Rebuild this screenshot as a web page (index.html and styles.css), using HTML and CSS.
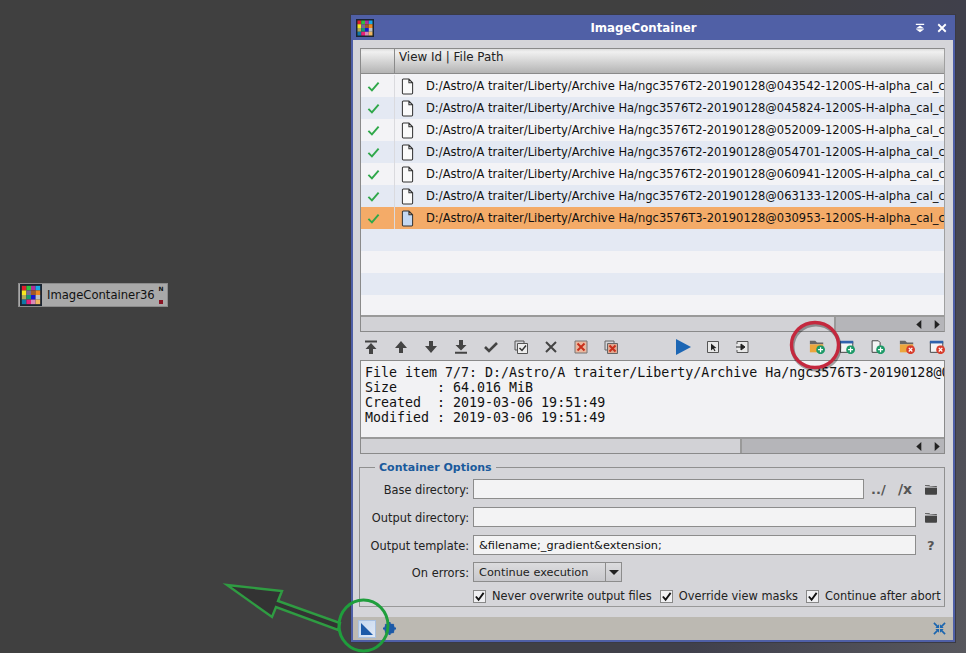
FILE: index.html
```html
<!DOCTYPE html>
<html>
<head>
	<title>ImageContainer</title>
	<link rel="stylesheet" href="styles.css">
</head>
<body>
	<svg class="defs" width="0" height="0">
		<defs>
			<symbol id="grid" viewBox="0 0 24 24">
				<rect width="24" height="24" fill="#1b2430"/>
				<rect x="2" y="2" width="5" height="5" fill="#e0202c"/><rect x="7" y="2" width="5" height="5" fill="#2fc040"/><rect x="12" y="2" width="5" height="5" fill="#b03098"/><rect x="17" y="2" width="5" height="5" fill="#18a8e8"/>
				<rect x="2" y="7" width="5" height="5" fill="#f8e820"/><rect x="7" y="7" width="5" height="5" fill="#786898"/><rect x="12" y="7" width="5" height="5" fill="#a05828"/><rect x="17" y="7" width="5" height="5" fill="#f08820"/>
				<rect x="2" y="12" width="5" height="5" fill="#b0a858"/><rect x="7" y="12" width="5" height="5" fill="#189870"/><rect x="12" y="12" width="5" height="5" fill="#1818d0"/><rect x="17" y="12" width="5" height="5" fill="#c0c0c0"/>
				<rect x="2" y="17" width="5" height="5" fill="#1078a8"/><rect x="7" y="17" width="5" height="5" fill="#e82078"/><rect x="12" y="17" width="5" height="5" fill="#d888b8"/><rect x="17" y="17" width="5" height="5" fill="#f0b860"/>
			</symbol>
			<symbol id="check" viewBox="0 0 16 14"><path d="M1.500 7.500l4.500 4.500 8.500-10" fill="none" stroke="#2fa84a" stroke-width="2.400"/></symbol>
			<symbol id="doc" viewBox="0 0 14 18"><path d="M2.500 1h6l4 4v11a1 1 0 0 1-1 1h-9a1 1 0 0 1-1-1V2a1 1 0 0 1 1-1zM8.500 1v4h4" fill="inherit" stroke="#333" stroke-width="1.100"/></symbol>
			<symbol id="folder" viewBox="0 0 14 12"><path d="M0 2V1h5l1 1h7a1 1 0 0 1 1 1v8a1 1 0 0 1-1 1H1a1 1 0 0 1-1-1V3h14" fill="#444"/><path d="M0 3.600h14" stroke="#d4d4d8" stroke-width=".8"/></symbol>
			<symbol id="yfolder" viewBox="0 0 18 16"><path d="M1 1h6l2 2h7v2H1z" fill="#666"/><path d="M1 5h15v9H1z" fill="#eca63c"/></symbol>
			<symbol id="win" viewBox="0 0 18 16"><path d="M1.500 2h14v12h-14z" fill="#f4f4f4" stroke="#333"/><path d="M1 1h15v3H1z" fill="#2f62ac"/></symbol>
			<symbol id="plus" viewBox="0 0 10 10"><circle cx="5" cy="5" r="5" fill="#1d9a68"/><path d="M5 2.200v5.600M2.200 5h5.600" stroke="#fff" stroke-width="1.400"/></symbol>
			<symbol id="minus" viewBox="0 0 10 10"><circle cx="5" cy="5" r="5" fill="#d83c2c"/><path d="M3 3l4 4M7 3l-4 4" stroke="#fff" stroke-width="1.400"/></symbol>
			<symbol id="left" viewBox="0 0 8 12"><path d="M6.500 1v10L1 6z" fill="#222"/></symbol>
			<symbol id="right" viewBox="0 0 8 12"><path d="M1.500 1v10L7 6z" fill="#222"/></symbol>
		</defs>
	</svg>

	<div class="node">
		<svg class="node-icon"><use href="#grid"/></svg>
		<span class="node-name">ImageContainer36</span>
		<div class="node-ports"><span class="port-n">N</span><span class="port-p"></span></div>
	</div>

	<div class="win">
		<div class="titlebar">
			<svg class="title-icon"><use href="#grid"/></svg>
			<span class="title">ImageContainer</span>
			<svg class="title-btn" viewBox="0 0 12 10"><path d="M1 0h10v1.400H1zM6 2l5 3.600H1zM6 10L1 6.400h10z" fill="#fff"/></svg>
			<svg class="title-btn title-close" viewBox="0 0 12 12"><path d="M1.500 1.500l9 9M10.500 1.500l-9 9" stroke="#fff" stroke-width="2.200"/></svg>
		</div>

		<div class="content">
			<div class="table">
				<div class="thead">
					<div class="col-check"></div>
					<div class="col-path">View Id | File Path</div>
				</div>
				<div class="rows">
					<div class="row"><div class="cell-check"><svg class="ico-check"><use href="#check"/></svg></div><div class="cell-path"><svg class="ico-doc" fill="#fafafa"><use href="#doc"/></svg><span class="path">D:/Astro/A traiter/Liberty/Archive Ha/ngc3576T2-20190128@043542-1200S-H-alpha_cal_c</span></div></div>
					<div class="row alt"><div class="cell-check"><svg class="ico-check"><use href="#check"/></svg></div><div class="cell-path"><svg class="ico-doc" fill="#fafafa"><use href="#doc"/></svg><span class="path">D:/Astro/A traiter/Liberty/Archive Ha/ngc3576T2-20190128@045824-1200S-H-alpha_cal_c</span></div></div>
					<div class="row"><div class="cell-check"><svg class="ico-check"><use href="#check"/></svg></div><div class="cell-path"><svg class="ico-doc" fill="#fafafa"><use href="#doc"/></svg><span class="path">D:/Astro/A traiter/Liberty/Archive Ha/ngc3576T2-20190128@052009-1200S-H-alpha_cal_c</span></div></div>
					<div class="row alt"><div class="cell-check"><svg class="ico-check"><use href="#check"/></svg></div><div class="cell-path"><svg class="ico-doc" fill="#fafafa"><use href="#doc"/></svg><span class="path">D:/Astro/A traiter/Liberty/Archive Ha/ngc3576T2-20190128@054701-1200S-H-alpha_cal_c</span></div></div>
					<div class="row"><div class="cell-check"><svg class="ico-check"><use href="#check"/></svg></div><div class="cell-path"><svg class="ico-doc" fill="#fafafa"><use href="#doc"/></svg><span class="path">D:/Astro/A traiter/Liberty/Archive Ha/ngc3576T2-20190128@060941-1200S-H-alpha_cal_c</span></div></div>
					<div class="row alt"><div class="cell-check"><svg class="ico-check"><use href="#check"/></svg></div><div class="cell-path"><svg class="ico-doc" fill="#fafafa"><use href="#doc"/></svg><span class="path">D:/Astro/A traiter/Liberty/Archive Ha/ngc3576T2-20190128@063133-1200S-H-alpha_cal_c</span></div></div>
					<div class="row sel"><div class="cell-check"><svg class="ico-check"><use href="#check"/></svg></div><div class="cell-path"><svg class="ico-doc" fill="#c4d8f2"><use href="#doc"/></svg><span class="path">D:/Astro/A traiter/Liberty/Archive Ha/ngc3576T3-20190128@030953-1200S-H-alpha_cal_c</span></div></div>
					<div class="row alt"></div>
					<div class="row"></div>
					<div class="row alt"></div>
					<div class="row"></div>
				</div>
				<div class="hscroll">
					<div class="thumb thumb-table"></div>
					<svg class="sb-arrow"><use href="#left"/></svg>
					<svg class="sb-arrow"><use href="#right"/></svg>
				</div>
			</div>

			<div class="toolbar">
				<div class="tb"><svg viewBox="0 0 16 16"><path d="M2 1.500h12v2H2z" fill="#444"/><path d="M8 4L2.500 10H6v5h4v-5h3.500z" fill="#444"/></svg></div>
				<div class="tb"><svg viewBox="0 0 16 16"><path d="M8 2L2 9h4v5h4V9h4z" fill="#444"/></svg></div>
				<div class="tb"><svg viewBox="0 0 16 16"><path d="M8 14l6-7h-4V2H6v5H2z" fill="#444"/></svg></div>
				<div class="tb"><svg viewBox="0 0 16 16"><path d="M8 11.500L2.500 6H6V1h4v5h3.500zM2 12.800h12v2H2z" fill="#444"/></svg></div>
				<div class="tb"><svg viewBox="0 0 16 16"><path d="M2 8l4 4 8-8" fill="none" stroke="#444" stroke-width="2.600"/></svg></div>
				<div class="tb"><svg viewBox="0 0 16 16"><path d="M2 2h9v2M2 2v9h2" fill="none" stroke="#555"/><path d="M4.500 4.500h10v10h-10z" fill="#eee" stroke="#555"/><path d="M6.500 9l2.500 2.500 4-5" fill="none" stroke="#333" stroke-width="1.500"/></svg></div>
				<div class="tb"><svg viewBox="0 0 16 16"><path d="M3 3l10 10M13 3L3 13" stroke="#444" stroke-width="2"/></svg></div>
				<div class="tb"><svg viewBox="0 0 16 16"><path d="M2 2h12v12H2z" fill="#eab8a0" stroke="#777"/><path d="M4.500 4.500l7 7M11.500 4.500l-7 7" stroke="#c8301c" stroke-width="2"/></svg></div>
				<div class="tb"><svg viewBox="0 0 16 16"><path d="M2 2h9v2M2 2v9h2" fill="none" stroke="#666"/><path d="M4.500 4.500h10v10h-10z" fill="#e0a890" stroke="#666"/><path d="M6.500 6.500l6 6M12.500 6.500l-6 6" stroke="#c8301c" stroke-width="2"/></svg></div>

				<div class="tb tb-play"><svg viewBox="0 0 16 16"><path d="M1 0l15 8-15 8z" fill="#1c66b4"/></svg></div>
				<div class="tb"><svg viewBox="0 0 16 16"><path d="M2.500 2.500h11v11h-11z" fill="#e8e8e8" stroke="#555"/><path d="M6 4.500v7l2-1.800 1.500 2.600 1-.6-1.500-2.500 2.500-.2z" fill="#222"/></svg></div>
				<div class="tb"><svg viewBox="0 0 16 16"><path d="M2 5V2.500h11v11H2V11" fill="#e8e8e8" stroke="#555"/><path d="M1 8h6M6 5l4 3-4 3z" fill="#222" stroke="#222"/></svg></div>

				<div class="tb tb-add"><svg viewBox="0 0 18 16"><use href="#yfolder"/><use href="#plus" x="8" y="6" width="10" height="10"/></svg></div>
				<div class="tb"><svg viewBox="0 0 18 16"><use href="#win"/><use href="#plus" x="8" y="6" width="10" height="10"/></svg></div>
				<div class="tb"><svg viewBox="0 0 18 16"><path d="M3.500 1h7l2 2v11h-9z" fill="#f4f4f4" stroke="#333"/><use href="#plus" x="8" y="6" width="10" height="10"/></svg></div>
				<div class="tb"><svg viewBox="0 0 18 16"><use href="#yfolder"/><use href="#minus" x="8" y="6" width="10" height="10"/></svg></div>
				<div class="tb"><svg viewBox="0 0 18 16"><use href="#win"/><use href="#minus" x="8" y="6" width="10" height="10"/></svg></div>
			</div>

			<div class="info">
				<pre class="info-text">File item 7/7: D:/Astro/A traiter/Liberty/Archive Ha/ngc3576T3-20190128@0
Size     : 64.016 MiB
Created  : 2019-03-06 19:51:49
Modified : 2019-03-06 19:51:49</pre>
				<div class="hscroll">
					<div class="thumb thumb-info"></div>
					<svg class="sb-arrow"><use href="#left"/></svg>
					<svg class="sb-arrow"><use href="#right"/></svg>
				</div>
			</div>

			<fieldset class="group">
				<legend>Container Options</legend>
				<div class="frow frow-base">
					<label>Base directory:</label>
					<div class="input"></div>
					<span class="tool-txt">../</span>
					<span class="tool-txt tool-fx">/x</span>
					<svg class="tool-ico"><use href="#folder"/></svg>
				</div>
				<div class="frow frow-out">
					<label>Output directory:</label>
					<div class="input"></div>
					<svg class="tool-ico"><use href="#folder"/></svg>
				</div>
				<div class="frow frow-tpl">
					<label>Output template:</label>
					<div class="input">&amp;filename;_gradient&amp;extension;</div>
					<span class="tool-q">?</span>
				</div>
				<div class="frow frow-err">
					<label>On errors:</label>
					<div class="combo">
						<span class="combo-val">Continue execution</span>
						<span class="combo-arrow"></span>
					</div>
				</div>
				<div class="checks">
					<span class="chk"><span class="box"><svg viewBox="0 0 12 12"><path d="M2 6l3 3.500L10.500 2" fill="none" stroke="#111" stroke-width="2"/></svg></span>Never overwrite output files</span>
					<span class="chk"><span class="box"><svg viewBox="0 0 12 12"><path d="M2 6l3 3.500L10.500 2" fill="none" stroke="#111" stroke-width="2"/></svg></span>Override view masks</span>
					<span class="chk"><span class="box"><svg viewBox="0 0 12 12"><path d="M2 6l3 3.500L10.500 2" fill="none" stroke="#111" stroke-width="2"/></svg></span>Continue after abort</span>
				</div>
			</fieldset>
		</div>

		<div class="footer">
			<span class="foot-btn"><svg viewBox="0 0 14 14"><path d="M1 1l12 12H1z" fill="#1c5aa8"/></svg></span>
			<svg class="foot-gear" viewBox="0 0 14 14"><circle cx="7" cy="7" r="4" fill="none" stroke="#1c5aa8" stroke-width="3.400"/><path d="M7 0v14M0 7h14M2.500 2.500l9 9M11.500 2.500l-9 9" stroke="#1c5aa8" stroke-width="2.200"/></svg>
			<svg class="foot-shrink" viewBox="0 0 14 14"><path d="M1 1l4.500 4.500M13 1L8.500 5.500M1 13l4.500-4.500M13 13L8.500 8.500" stroke="#1c66b0" stroke-width="1.800"/><path d="M6.500 6.500V2.500L2.500 6.500zM7.500 6.500V2.500l4 4zM6.500 7.500v4l-4-4zM7.500 7.500v4l4-4z" fill="#1c66b0"/></svg>
		</div>
	</div>

	<svg class="marks" viewBox="0 0 966 653">
		<ellipse cx="815" cy="345" rx="23.500" ry="22.500" fill="none" stroke="#00000055" stroke-width="4" transform="translate(1 2)"/>
		<ellipse cx="815" cy="345" rx="23.500" ry="22.500" fill="none" stroke="#c4283e" stroke-width="3.400"/>
		<path d="M227 585l55 6-4 10 62 22-2 7-62-23-4 10z" fill="#26262680" stroke="#2f9c42" stroke-width="2.400"/>
		<ellipse cx="363.500" cy="625.500" rx="24.500" ry="25.500" fill="none" stroke="#1f9e3c" stroke-width="3"/>
	</svg>
</body>
</html>
```

FILE: styles.css
```css
html,body{
	margin:0;
	padding:0;
}
body{
	width:966px;
	height:653px;
	overflow:hidden;
	position:relative;
	background:linear-gradient(115deg,#404040 55%,#40404c 78%,#58585e 100%);
	font-family:"DejaVu Sans",sans-serif;
	color:#222;
}
.defs{
	position:absolute;
}

/* process icon on the workspace */
.node{
	position:absolute;
	left:18px;
	top:283px;
	width:150px;
	height:24px;
	background:#a9a9a9;
	border:1px solid #8c8c8c;
	box-sizing:border-box;
	display:flex;
	align-items:center;
	padding-left:1px;
}
.node-icon{
	width:22px;
	height:22px;
}
.node-name{
	margin-left:5px;
	font-size:11.6px;
	color:#111;
	flex:1;
}
.node-ports{
	display:flex;
	flex-direction:column;
	align-items:center;
	justify-content:space-between;
	height:20px;
	width:10px;
	margin-right:1px;
}
.port-n{
	font-size:6px;
	font-weight:bold;
	color:#111;
	line-height:7px;
}
.port-p{
	width:4px;
	height:4px;
	background:#8a1424;
	margin-bottom:1px;
}

/* window */
.win{
	position:absolute;
	left:351px;
	top:15px;
	width:604px;
	height:627px;
	box-sizing:border-box;
	border:2px solid #4f5fa6;
	border-top:0;
	background:#d5d5d9;
	display:flex;
	flex-direction:column;
	box-shadow:0 0 0 1px #3a3a44;
}
.titlebar{
	height:25px;
	background:#5060a6;
	display:flex;
	align-items:center;
	flex:none;
	color:#fff;
}
.title-icon{
	width:18px;
	height:18px;
	margin-left:3px;
}
.title{
	flex:1;
	text-align:center;
	font-weight:bold;
	font-size:11.8px;
	padding-right:2px;
}
.title-btn{
	width:10px;
	height:10px;
	margin-right:12px;
}
.title-close{
	margin-right:6px;
}
.content{
	flex:1;
	padding:8px 8px 0 7px;
	display:flex;
	flex-direction:column;
	min-height:0;
}
.table{
	border:1px solid #8a8a8a;
	border-right-color:#a0a0a0;
	height:284px;
	box-sizing:border-box;
	display:flex;
	flex-direction:column;
	flex:none;
	background:#f3f3f6;
}
.thead{
	display:flex;
	height:25px;
	flex:none;
	box-sizing:border-box;
	border-bottom:1px solid #8a8a8a;
	background:linear-gradient(#dedede,#f0f0f0 12%,#b4b4b4);
	font-size:11.9px;
}
.col-check{
	width:33px;
	border-right:1px solid #8a8a8a;
}
.col-path{
	padding:1px 0 0 4px;
}
.rows{
	flex:1;
	overflow:hidden;
	padding-top:1px;
}
.row{
	display:flex;
	height:22px;
	font-size:11.53px;
	color:#111;
}
.alt{
	background:#e4e9f3;
}
.sel{
	background:#f4ab68;
}
.cell-check{
	border-right:1px solid #dadade;
	display:flex;
	align-items:center;
	padding-left:6px;
	width:27px;
}
.ico-check{
	width:13px;
	height:11px;
}
.cell-path{
	flex:1;
	display:flex;
	align-items:center;
	min-width:0;
	padding-left:6px;
}
.ico-doc{
	width:13px;
	height:17px;
	flex:none;
}
.path{
	margin-left:12px;
	white-space:nowrap;
	overflow:hidden;
}
.hscroll{
	height:16px;
	flex:none;
	box-sizing:border-box;
	border-top:2px solid #9a9a9a;
	background:#b5b5b9;
	display:flex;
	align-items:center;
	padding-right:3px;
}
.thumb{
	height:100%;
	background:#d2d2d6;
	border-right:2px solid #999;
	box-sizing:border-box;
}
.thumb-table{
	width:475px;
	margin-right:auto;
}
.thumb-info{
	width:381px;
	margin-right:auto;
}
.sb-arrow{
	width:8px;
	height:11px;
	margin-left:10px;
}

.toolbar{
	display:flex;
	height:28px;
	flex:none;
	align-items:center;
	overflow:hidden;
	margin-left:-4px;
	padding-top:1px;
	box-sizing:border-box;
}
.tb{
	width:30px;
	flex:none;
	display:flex;
	justify-content:center;
}
.tb svg{
	width:16px;
	height:16px;
}
.tb-play{
	margin-left:42px;
}
.tb-add{
	margin-left:44px;
}

.info{
	height:94px;
	box-sizing:border-box;
	border:1px solid #8a8a8a;
	display:flex;
	flex-direction:column;
	flex:none;
	background:#f2f2f4;
}
.info-text{
	flex:1;
	margin:0;
	padding:4px 0 0 4px;
	font-family:"DejaVu Sans Mono",monospace;
	font-size:13.3px;
	line-height:15px;
	color:#111;
	overflow:hidden;
}

.group{
	margin:7px 0 0 -1px;
	padding:0;
	border:1px solid #909090;
	border-bottom-color:#999;
	height:146px;
	box-sizing:border-box;
	min-width:0;
	display:block;
}
.group legend{
	margin-left:15px;
	padding:0 4px;
	font-size:11px;
	font-weight:bold;
	color:#1a5a9c;
	line-height:13px;
}
.frow{
	display:flex;
	align-items:center;
	margin-top:8px;
	height:20px;
}
.frow-base{
	margin-top:5px;
}
.frow-err{
	margin-top:7px;
}
.frow label{
	width:109px;
	flex:none;
	text-align:right;
	font-size:11.4px;
	color:#222;
	margin-right:4px;
	padding-top:1px;
}
.input{
	height:20px;
	box-sizing:border-box;
	border:1px solid #8c8c8c;
	background:#f3f3f4;
	font-size:11.3px;
	line-height:19px;
	padding-left:5px;
	color:#111;
	flex:none;
	width:443px;
}
.frow-base .input{
	width:391px;
}
.tool-txt{
	font-weight:bold;
	font-size:13px;
	color:#555;
	margin-left:7px;
	width:17px;
}
.tool-fx{
	margin-left:10px;
	font-size:14px;
}
.tool-ico{
	width:12px;
	height:11px;
	margin-left:9px;
	flex:none;
}
.frow-base .tool-ico{
	margin-left:10px;
}
.tool-q{
	font-weight:bold;
	font-size:13px;
	color:#555;
	margin-left:11px;
}
.combo{
	width:149px;
	height:20px;
	box-sizing:border-box;
	border:1px solid #8c8c8c;
	background:linear-gradient(#dcdcde,#c8c8cc);
	display:flex;
	font-size:11.3px;
	align-items:center;
}
.combo-val{
	flex:1;
	padding:1px 0 0 5px;
}
.combo-arrow{
	width:16px;
	height:100%;
	border-left:1px solid #8c8c8c;
	box-sizing:border-box;
	display:flex;
	align-items:center;
	justify-content:center;
}
.combo-arrow::after{
	content:"";
	border-left:5px solid transparent;
	border-right:5px solid transparent;
	border-top:5px solid #222;
}
.checks{
	display:flex;
	margin:7px 0 0 113px;
	font-size:11.4px;
	color:#222;
	white-space:nowrap;
}
.chk{
	display:flex;
	align-items:center;
	margin-right:8px;
}
.box{
	width:13px;
	height:13px;
	box-sizing:border-box;
	border:1px solid #888;
	background:#f0f0f2;
	margin-right:6px;
	display:flex;
}
.box svg{
	width:11px;
	height:11px;
}

.footer{
	height:23px;
	flex:none;
	background:#bcb9b2;
	display:flex;
	align-items:center;
	padding-left:5px;
	padding-right:7px;
}
.foot-btn{
	width:18px;
	height:18px;
	box-sizing:border-box;
	background:linear-gradient(135deg,#c4d8f0,#e0e8f4);
	border:1px solid #a8c0e0;
	display:flex;
	align-items:center;
	justify-content:center;
}
.foot-btn svg{
	width:14px;
	height:14px;
}
.foot-gear{
	width:13px;
	height:13px;
	margin-left:7px;
}
.foot-shrink{
	width:13px;
	height:13px;
	margin-left:auto;
}

/* annotations drawn over the screenshot */
.marks{
	position:absolute;
	left:0;
	top:0;
	width:966px;
	height:653px;
	pointer-events:none;
}
```
